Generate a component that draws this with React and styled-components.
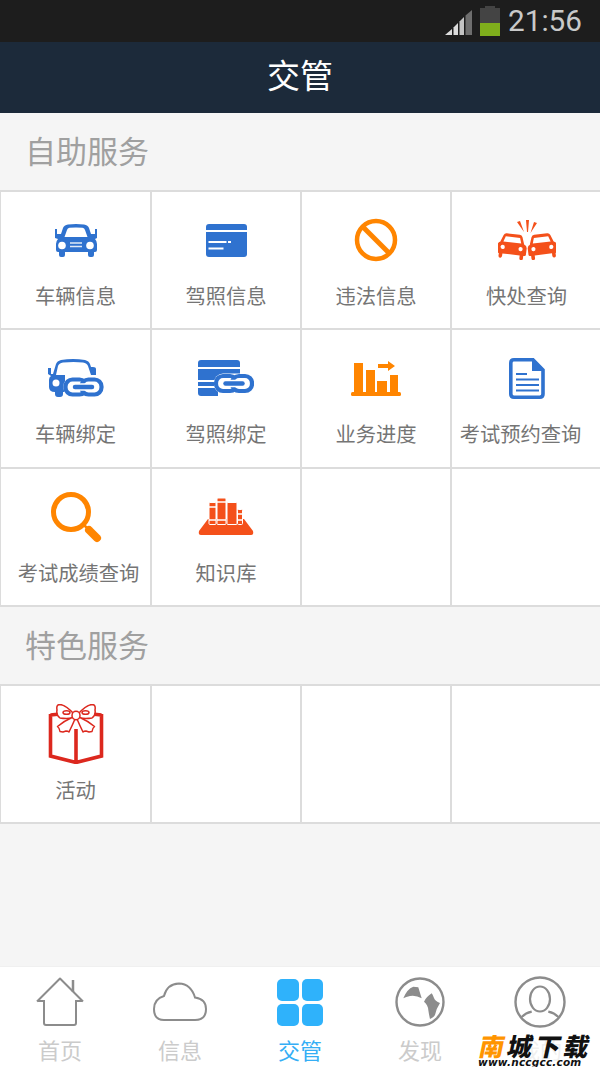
import React from 'react';
import styled, { createGlobalStyle } from 'styled-components';

const CJK = '"Noto Sans CJK SC", "Noto Sans", sans-serif';
const BLUE = '#2f72cf';
const ORANGE = '#ff8500';
const RED = '#f4501a';
const GREY = '#8c8c8c';

const Global = createGlobalStyle`
  html, body { margin: 0; padding: 0; background: #f5f5f5; }
  body { font-family: ${CJK}; }
`;
const Page = styled.div`
  position: relative; width: 600px; height: 1067px; overflow: hidden;
  display: flex; flex-direction: column; background: #f5f5f5;
`;
const StatusBar = styled.div`
  height: 42px; background: #1d1d1d; display: flex; align-items: center;
  justify-content: flex-end; padding-right: 18px; box-sizing: border-box;
`;
const SignalWrap = styled.div`display: flex; margin-right: 7px; margin-top: 2px;`;
const BatteryWrap = styled.div`display: flex; margin-right: 8px;`;
const Clock = styled.span`
  font: 400 29.700px/42px Roboto, sans-serif; color: #c9c9c9;
`;
const Header = styled.header`
  height: 71px; background: #1c2a3a; color: #fff; display: flex;
  align-items: center; justify-content: center;
  font-size: 33px; line-height: 64px; font-weight: 400; padding-bottom: 7px; box-sizing: border-box;
`;
const Main = styled.main`flex: 1; display: flex; flex-direction: column;`;
const SectionTitle = styled.h2`
  margin: 0; height: 77px; box-sizing: border-box; padding: 12px 0 0 25px;
  font-size: 31px; line-height: 50px; font-weight: 400; color: #a0a0a0;
`;
const Grid = styled.div`
  display: grid; grid-template-columns: 149px 148px 148px 149px;
  grid-auto-rows: 136.330px; gap: 2px; padding: 2px 0 2px 1px; background: #dcdcdc;
`;
const Cell = styled.div`
  background: #fff; display: flex; flex-direction: column; align-items: center;
`;
const IconSlot = styled.div`
  height: 64px; margin-top: 16px; display: flex; align-items: center; justify-content: center;
`;
const Label = styled.div`
  margin-top: 9px; margin-left: ${p => p.$shift || 0}px;
  font-size: 20.300px; line-height: 28px; color: #757575; white-space: nowrap; font-weight: 400;
`;
const TabBar = styled.nav`
  height: 101px; background: #fff; display: grid; grid-template-columns: repeat(5, 120px);
  border-top: 1px solid #f0f0f0; box-sizing: border-box;
`;
const Tab = styled.div`
  display: flex; flex-direction: column; align-items: center; color: ${p => (p.$active ? '#35aef5' : '#cbcbcb')};
`;
const TabIcon = styled.div`
  height: 70px; display: flex; align-items: center; justify-content: center;
`;
const TabLabel = styled.div`font-size: 22px; line-height: 28px; margin-top: -2px; font-weight: 400;`;
const Watermark = styled.div`
  position: absolute; left: 476px; top: 1033px; width: 118px; height: 34px; display: flex; flex-direction: column;
  align-items: flex-start; background: rgba(255,255,255,0.7);
`;
const MarkTitle = styled.div`
  font-size: 25px; line-height: 24px; font-weight: 900; color: #111; white-space: nowrap;
  letter-spacing: 3.200px; transform: skewX(-12deg); margin-left: 4px;
  span { color: #ff9500; }
`;
const MarkUrl = styled.div`
  font: italic 700 10.500px/11px "DejaVu Sans", sans-serif; color: #111; letter-spacing: .2px;
  white-space: nowrap; margin-left: 2px;
`;
const AppsGrid = styled.div`
  width: 46px; height: 47px; display: grid; grid-template: 1fr 1fr / 1fr 1fr; gap: 3px;
  i { background: #2fb2fb; border-radius: 5px; display: block; }
`;

const Signal = () => (
  <svg width="28" height="27" viewBox="0 0 28 27">
    <path d="M0 26 L7 20 V26Z" fill="#dcdcdc" />
    <path d="M8.500 18.500 L13 14 V26 H8.500Z" fill="#dcdcdc" />
    <path d="M14.500 12.500 L19 8 V26 H14.500Z" fill="#c4c4c4" />
    <path d="M20.500 6.500 L27 1 V26 H20.500Z" fill="#6e6e6e" />
  </svg>
);
const Battery = () => (
  <svg width="20" height="32" viewBox="0 0 20 32">
    <rect x="5" y="1" width="10" height="3" fill="#444" />
    <rect x="0" y="3" width="20" height="15" fill="#444" />
    <rect x="0" y="18" width="20" height="13" fill="#7fae1c" />
  </svg>
);

const CarIcon = () => (
  <svg width="44" height="35" viewBox="0 0 44 35">
    <path fill={BLUE} d="M1 6h2v5h4l2-6q1-3 5-3.500q8-1 16 0q4 .5 5 3.500l2 6h4v-5h2v9l-2 1q2 2 2 5v6q0 2-2 2h-1v3q0 2-2 2h-2q-2 0-2-2v-3H11v3q0 2-2 2H7q-2 0-2-2v-3H4q-2 0-2-2v-6q0-3 2-5l-3-1z" />
    <path d="M10.500 14l2.500-7q.5-2 2.500-2.200q6.500-.8 13 0q2 .2 2.500 2.200l2.500 7z" fill="#fff" />
    <circle cx="8" cy="22.500" r="3.800" fill="#fff" />
    <circle cx="36" cy="22.500" r="3.800" fill="#fff" />
    <path d="M16 20h12M16 23.500h12" stroke="#fff" strokeWidth="1.400" opacity=".85" />
  </svg>
);
const CardIcon = () => (
  <svg width="41" height="33" viewBox="0 0 41 33">
    <path d="M0 6V3q0-3 3-3h35q3 0 3 3v3z" fill={BLUE} />
    <path d="M0 8h41v22q0 3-3 3H3q-3 0-3-3z" fill={BLUE} />
    <path d="M2.500 18h18M2.500 24.500h15" stroke="#fff" strokeWidth="2" />
    <rect x="22" y="17" width="3" height="2" fill="#fff" />
  </svg>
);
const BanIcon = () => (
  <svg width="44" height="44" viewBox="0 0 44 44">
    <circle cx="22" cy="22" r="19" fill="none" stroke={ORANGE} strokeWidth="4.500" />
    <path d="M9 9l26 26" stroke={ORANGE} strokeWidth="5" />
  </svg>
);
const SmallCar = ({ tf }) => (
  <g transform={tf}>
    <path d="M-12 -2l2.500-7q.8-2 3-2h13q2.200 0 3 2l2.500 7q3 1 3 4v6q0 1.500-1.500 1.500h-1v2.500q0 2-1.800 2t-1.800-2v-2.500h-17.400v2.500q0 2-1.800 2t-1.800-2v-2.500h-1q-1.500 0-1.500-1.500v-6q0-3 3-4z" fill={RED} />
    <path d="M-9 -2.500l1.800-5.500h14.400l1.800 5.500z" fill="#fff" />
    <circle cx="-9" cy="3" r="2.100" fill="#fff" />
    <circle cx="9" cy="3" r="2.100" fill="#fff" />
  </g>
);
const CrashIcon = () => (
  <svg width="58" height="40" viewBox="0 0 58 40">
    <SmallCar tf="translate(14 25) rotate(7)" />
    <SmallCar tf="translate(44 25) rotate(-7)" />
    <path d="M19 2l3-1 4 11zM28 0h3l-1 12h-1zM36 2l3 1-6.500 10z" fill={RED} />
  </svg>
);
const Chain = ({ x, y }) => (
  <g transform={`translate(${x} ${y})`}>
    <rect x="-.500" y="-.500" width="40" height="20" rx="9" fill="#fff" />
    <rect x="1.500" y="2" width="21" height="15" rx="7" fill="#fff" stroke={BLUE} strokeWidth="4.200" />
    <rect x="17.500" y="2" width="20" height="15" rx="7" fill="#fff" stroke={BLUE} strokeWidth="4.200" />
    <path d="M10.500 9.500h18" stroke="#fff" strokeWidth="7.500" strokeLinecap="round" />
    <path d="M11 9.500h17" stroke={BLUE} strokeWidth="4.500" strokeLinecap="round" />
  </g>
);
const CarLinkIcon = () => (
  <svg width="57" height="39" viewBox="0 0 57 39">
    <path d="M1 9h3v6h2l3-10q1-3 5-4q12-2 24 0q4 1 5 4l1 3h2q3 0 3 2v6h-5l-3-9q-1-3-5-3.500q-9-1.200-20 0q-4 .5-5 3.500l-2 9h9v3H18v14h-2v2q0 3-3 3h-2q-3 0-3-3v-2q-6 0-6-5v-7q0-3 2-4l-3-2z" fill={BLUE} />
    <circle cx="9" cy="24" r="3.500" fill="#fff" />
    <Chain x="17" y="18.500" />
  </svg>
);
const CardLinkIcon = () => (
  <svg width="56" height="36" viewBox="0 0 56 36">
    <path d="M0 7V3q0-3 3-3h36q3 0 3 3v4z" fill={BLUE} />
    <path d="M0 9h42v9H20v18H3q-3 0-3-3z" fill={BLUE} />
    <path d="M0 21h18M0 27h18" stroke="#fff" strokeWidth="2" />
    <Chain x="16.500" y="14" />
  </svg>
);
const ChartIcon = () => (
  <svg width="50" height="35" viewBox="0 0 50 35">
    <g fill={ORANGE}>
      <rect x="3" y="2" width="9" height="29" />
      <rect x="15" y="9" width="9" height="22" />
      <rect x="26" y="20" width="10" height="11" />
      <rect x="39" y="14" width="8" height="17" />
      <rect x="0" y="31" width="50" height="4" rx="1.500" />
      <path d="M27 3h10V0l7 5-7 5V7H27z" />
    </g>
  </svg>
);
const DocIcon = () => (
  <svg width="36" height="41" viewBox="0 0 36 41">
    <path d="M5 1.800h19L34 12v24q0 3.200-3.200 3.200H5q-3.200 0-3.200-3.200V5Q1.800 1.800 5 1.800z" fill="#fff" stroke={BLUE} strokeWidth="3.600" />
    <path d="M23 1v12h12z" fill={BLUE} />
    <path d="M7 16h11M7 21.500h23M7 27h23M7 32.500h23" stroke={BLUE} strokeWidth="2.200" />
  </svg>
);
const SearchIcon = () => (
  <svg width="52" height="52" viewBox="0 0 52 52">
    <circle cx="21" cy="21" r="17.500" fill="none" stroke={ORANGE} strokeWidth="5" />
    <path d="M34 34l3 3" stroke={ORANGE} strokeWidth="2.500" />
    <path d="M39 39l8 8" stroke={ORANGE} strokeWidth="8" strokeLinecap="round" />
  </svg>
);
const BooksIcon = () => (
  <svg width="56" height="38" viewBox="0 0 56 38">
    <path d="M10 21h36l9 12q1 4-2 4H3q-3 0-2-4z" fill={RED} />
    <g fill={RED} stroke="#fff" strokeWidth="1">
      <rect x="11" y="4.500" width="7" height="22" rx="1" />
      <rect x="19" y="0" width="9" height="26.500" rx="1" />
      <rect x="29" y="4.500" width="10" height="22" rx="1" />
      <rect x="39.500" y="11.500" width="5" height="15" rx="1" />
    </g>
    <path d="M11 9h7M11 22h7M19 4h9M19 22h9M39.500 16h5M39.500 22h5" stroke="#fff" strokeWidth="1.300" />
  </svg>
);
const GiftIcon = () => (
  <svg width="56" height="60" viewBox="0 0 56 60">
    <path d="M2.500 10v42l25.500 6.500L53.500 52V10M2.500 11L12 10M53.500 11L44 10M28 25v32" fill="none" stroke="#dc281e" strokeWidth="3.600" />
    <g fill="#fff" stroke="#dc281e" strokeWidth="1.500" strokeLinejoin="round">
      <path d="M27 11Q18 1 12 .5 8 .5 9 6q-1 5 3 8 6 1 13 0z" />
      <path d="M29 11Q38 1 44 .5q4 0 3 5.500 1 5-3 8-6 1-13 0z" />
      <path d="M25 13Q16 17 9.500 22.500q2 1.500 2.500 5l3 .5 3-1q2 0 3 1 3-6 6-13z" />
      <path d="M31 13q9 4 15.500 9.500-2 1.500-2.500 5l-3 .5-3-1q-2 0-3 1-3-6-6-13z" />
      <ellipse cx="28" cy="11.500" rx="4" ry="4.200" />
      <ellipse cx="18.500" cy="8.500" rx="3.500" ry="1.800" />
      <ellipse cx="37.500" cy="8.500" rx="3.500" ry="1.800" />
    </g>
  </svg>
);

const HomeIcon = () => (
  <svg width="50" height="50" viewBox="0 0 50 50">
    <path d="M9 23v23q0 2 2 2h28q2 0 2-2V23M2 24.500L25 1.500l23 23M9 24H3M41 24h6" fill="none" stroke={GREY} strokeWidth="2" strokeLinejoin="round" />
    <path d="M38 3v12" stroke={GREY} strokeWidth="2.500" />
  </svg>
);
const CloudIcon = () => (
  <svg width="54" height="40" viewBox="0 0 54 40">
    <path d="M11 38h31q11 0 11-11 0-10-11-11.500Q38 2 26 1.500 14 2 11 14 1 17 1 27q0 11 10 11z" fill="none" stroke={GREY} strokeWidth="2" />
  </svg>
);
const GlobeIcon = () => (
  <svg width="50" height="50" viewBox="0 0 50 50">
    <circle cx="25" cy="25" r="23.500" fill="none" stroke={GREY} strokeWidth="2.400" />
    <path d="M8.300 21.300Q12 12 18.300 9.700L23.300 10.300Q25 16 26.700 21.300Q21 18 15 19Q11 20 8.300 21.300z" fill={GREY} />
    <path d="M36.700 16.300Q31 20 29 24.700Q33 28 33.300 33Q34 38 35 42Q38 41 40 38Q41 32 45 26Q40 24 39 21Q38 18 36.700 16.300z" fill={GREY} />
  </svg>
);
const UserIcon = () => (
  <svg width="52" height="52" viewBox="0 0 52 52">
    <circle cx="26" cy="26" r="24.500" fill="none" stroke={GREY} strokeWidth="2.400" />
    <ellipse cx="26" cy="23" rx="10" ry="12.500" fill="none" stroke={GREY} strokeWidth="2.200" />
    <path d="M7.700 41q4-4 10-5.300M44.300 41q-4-4-10-5.300" fill="none" stroke={GREY} strokeWidth="2.200" />
  </svg>
);

const row1 = [
  [CarIcon, '车辆信息'], [CardIcon, '驾照信息'], [BanIcon, '违法信息'], [CrashIcon, '快处查询'],
  [CarLinkIcon, '车辆绑定'], [CardLinkIcon, '驾照绑定'], [ChartIcon, '业务进度'], [DocIcon, '考试预约查询', -12],
  [SearchIcon, '考试成绩查询', 6], [BooksIcon, '知识库'], [null], [null],
];
const row2 = [[GiftIcon, '活动'], [null], [null], [null]];

const Cells = ({ items }) => (
  <Grid>
    {items.map(([Icon, text, shift], i) => (
      <Cell key={i}>
        {Icon && <IconSlot><Icon /></IconSlot>}
        {Icon && <Label $shift={shift}>{text}</Label>}
      </Cell>
    ))}
  </Grid>
);

export default function App() {
  return (
    <Page>
      <Global />
      <StatusBar>
        <SignalWrap><Signal /></SignalWrap>
        <BatteryWrap><Battery /></BatteryWrap>
        <Clock>21:56</Clock>
      </StatusBar>
      <Header>交管</Header>
      <Main>
        <SectionTitle>自助服务</SectionTitle>
        <Cells items={row1} />
        <SectionTitle>特色服务</SectionTitle>
        <Cells items={row2} />
      </Main>
      <TabBar>
        <Tab><TabIcon><HomeIcon /></TabIcon><TabLabel>首页</TabLabel></Tab>
        <Tab><TabIcon><CloudIcon /></TabIcon><TabLabel>信息</TabLabel></Tab>
        <Tab $active><TabIcon><AppsGrid><i /><i /><i /><i /></AppsGrid></TabIcon><TabLabel>交管</TabLabel></Tab>
        <Tab><TabIcon><GlobeIcon /></TabIcon><TabLabel>发现</TabLabel></Tab>
        <Tab><TabIcon><UserIcon /></TabIcon><TabLabel>我的</TabLabel></Tab>
      </TabBar>
      <Watermark>
        <MarkTitle><span>南</span>城下载</MarkTitle>
        <MarkUrl>www.nccgcc.com</MarkUrl>
      </Watermark>
    </Page>
  );
}
